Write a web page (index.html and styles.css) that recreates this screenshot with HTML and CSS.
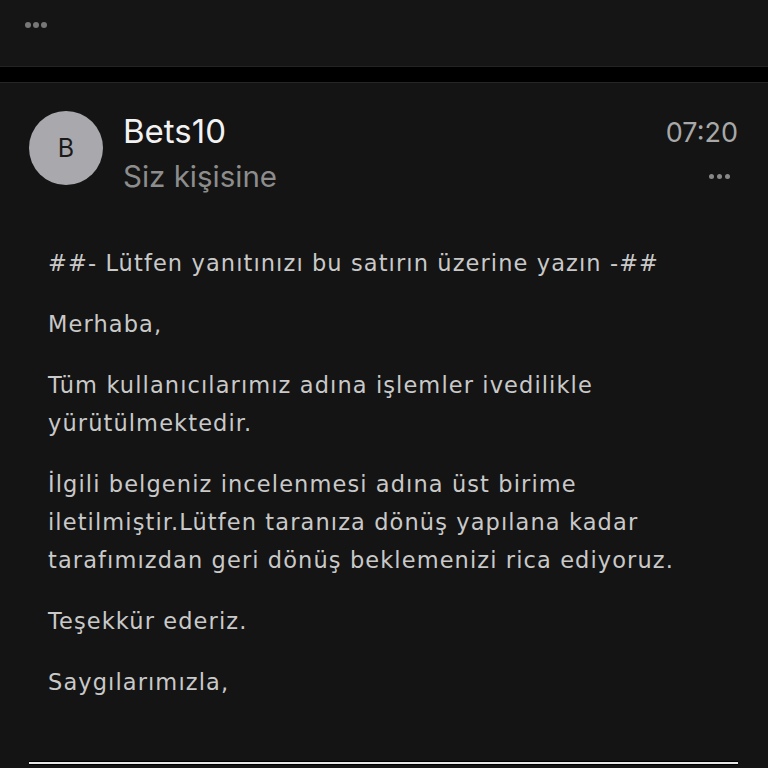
FILE: index.html
```html
<!DOCTYPE html>
<html lang="tr">
<head>
<meta charset="utf-8">
<link rel="stylesheet" href="styles.css">
</head>
<body>
<div class="topbar">
  <div class="dots"><span></span><span></span><span></span></div>
</div>
<div class="band"></div>
<div class="card">
  <div class="header">
    <div class="avatar">B</div>
    <div class="meta">
      <div class="name">Bets10</div>
      <div class="to">Siz kişisine</div>
    </div>
    <div class="side">
      <div class="time">07:20</div>
      <div class="dots small"><span></span><span></span><span></span></div>
    </div>
  </div>
  <div class="body">
    <p>##- Lütfen yanıtınızı bu satırın üzerine yazın -##</p>
    <p>Merhaba,</p>
    <p>Tüm kullanıcılarımız adına işlemler ivedilikle yürütülmektedir.</p>
    <p>İlgili belgeniz incelenmesi adına üst birime iletilmiştir.Lütfen taranıza dönüş yapılana kadar tarafımızdan geri dönüş beklemenizi rica ediyoruz.</p>
    <p>Teşekkür ederiz.</p>
    <p>Saygılarımızla,</p>
  </div>
  <div class="rule"></div>
</div>
</body>
</html>
```
FILE: styles.css
```css
html, body {
  margin: 0;
  padding: 0;
  background: #141414;
  width: 768px;
  height: 768px;
  overflow: hidden;
}
.topbar {
  height: 67px;
  background: #151515;
  border-bottom: 1px solid #232323;
  box-sizing: border-box;
  padding: 22px 0 0 25px;
}
.dots {
  display: flex;
  gap: 2px;
}
.dots span {
  width: 6px;
  height: 6px;
  border-radius: 50%;
  background: #777;
}
.band {
  height: 15px;
  background: #000;
  border-bottom: 1px solid #262626;
}
.card {
  background: #141414;
  padding: 28px 30px 0 29px;
}
.header {
  display: flex;
  align-items: flex-start;
}
.avatar {
  width: 74px;
  height: 74px;
  border-radius: 50%;
  background: #a9a8ad;
  color: #1a1a1a;
  font-family: Inter, "Liberation Sans", sans-serif;
  font-size: 25px;
  display: flex;
  align-items: center;
  justify-content: center;
  flex: none;
}
.meta {
  margin-left: 20px;
  flex: 1;
  font-family: Inter, "Liberation Sans", sans-serif;
}
.name {
  color: #f2f2f2;
  font-size: 33px;
  line-height: 40px;
  margin-top: 0px;
}
.to {
  color: #8d8d8d;
  font-size: 29.5px;
  line-height: 36px;
  margin-top: 7px;
}
.side {
  display: flex;
  flex-direction: column;
  align-items: flex-end;
  font-family: Inter, "Liberation Sans", sans-serif;
}
.time {
  color: #a8a8a8;
  font-size: 27px;
  line-height: 32px;
  margin-top: 6px;
}
.dots.small {
  margin-top: 25px;
  margin-right: 8px;
  gap: 3px;
}
.dots.small span {
  width: 5px;
  height: 5px;
  background: #888;
}
.body {
  margin-top: 50px;
  padding-left: 19px;
  font-family: "DejaVu Sans", Verdana, sans-serif;
  font-size: 22.5px;
  letter-spacing: 1.1px;
  line-height: 38px;
  color: #c9c9c9;
}
.body p {
  margin: 0 0 23px 0;
}
.rule {
  margin-top: 60px;
  height: 2px;
  background: #e6e6e6;
  border-top: 1px solid #000;
  border-bottom: 1px solid #000;
}
```
